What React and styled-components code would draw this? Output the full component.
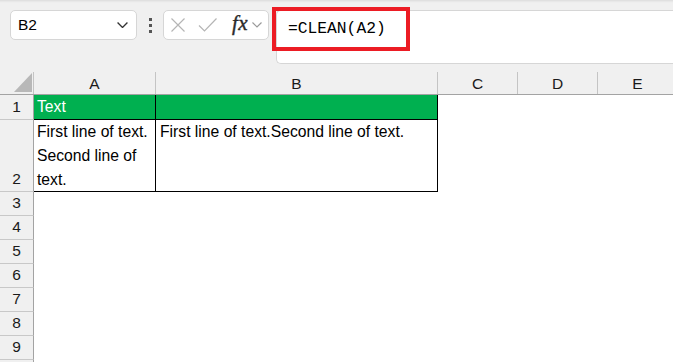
import React from 'react'
import styled, { createGlobalStyle } from 'styled-components'

const GlobalStyle = createGlobalStyle`
  html, body {
    margin: 0;
    padding: 0;
    background: #fff;
  }
  * {
    box-sizing: border-box;
  }
`

const Page = styled.div`
  width: 673px;
  height: 362px;
  overflow: hidden;
  display: flex;
  flex-direction: column;
  font-family: "Liberation Sans", Arial, sans-serif;
`

const Toolbar = styled.div`
  position: relative;
  height: 72px;
  flex-shrink: 0;
  display: flex;
  align-items: flex-start;
  padding: 10px 0 0 10px;
  background: linear-gradient(#dcdcdc 0, #ececec 2px, #f0f0f0 3px);
`

const NameBox = styled.div`
  width: 127px;
  height: 30px;
  display: flex;
  align-items: center;
  justify-content: space-between;
  padding: 0 8px 0 7px;
  background: #fff;
  border: 1px solid #d6d6d6;
  border-radius: 5px;
  font-size: 15.5px;
  color: #000;
`

const Dots = styled.div`
  width: 26px;
  height: 30px;
  display: flex;
  flex-direction: column;
  align-items: center;
  justify-content: center;
  gap: 3px;
`

const Dot = styled.span`
  width: 3px;
  height: 3px;
  background: #555;
`

const FxBox = styled.div`
  width: 106px;
  height: 30px;
  display: flex;
  align-items: center;
  padding: 0 4px 0 6px;
  background: #fff;
  border: 1px solid #d6d6d6;
  border-radius: 5px;
`

const Fx = styled.span`
  font-family: "Liberation Serif", "Times New Roman", serif;
  font-style: italic;
  font-size: 21px;
  color: #2b2b2b;
  margin: 0 4px 3px 14px;
  letter-spacing: 0.5px;
  -webkit-text-stroke: 0.4px #2b2b2b;
`

const FormulaBox = styled.div`
  flex: 1;
  height: 54px;
  margin-left: 7px;
  padding: 8px 0 0 11px;
  background: #fff;
  border: 1px solid #d6d6d6;
  border-right: none;
  border-radius: 5px 0 0 5px;
  font-family: "Liberation Mono", "Courier New", monospace;
  font-size: 16.3px;
  color: #000;
`

const Highlight = styled.div`
  position: absolute;
  left: 272px;
  top: 7px;
  width: 138px;
  height: 44px;
  border: 4px solid #ec1c24;
  pointer-events: none;
`

const Row = styled.div`
  display: flex;
  flex-shrink: 0;
  height: ${p => p.h}px;
`

const HeaderRow = styled(Row)`
  background: #f0f0f0;
  border-bottom: 1px solid #a3a3a3;
`

const Corner = styled.div`
  width: 34px;
  flex-shrink: 0;
  display: flex;
  align-items: flex-end;
  justify-content: flex-end;
  padding: 0 1px 2px 0;
  border-right: 1px solid #c4c4c4;
`

const ColHead = styled.div`
  width: ${p => p.w}px;
  flex-shrink: 0;
  display: flex;
  align-items: center;
  justify-content: center;
  padding-top: 1px;
  font-size: 15.5px;
  color: #1a1a1a;
  border-right: 1px solid #c4c4c4;
`

const RowHead = styled.div`
  width: 34px;
  flex-shrink: 0;
  display: flex;
  align-items: flex-end;
  justify-content: center;
  padding-bottom: 1px;
  background: #f0f0f0;
  border-right: 1px solid #a3a3a3;
  border-bottom: 1px solid #c8c8c8;
  font-size: 15.5px;
  line-height: 22px;
  color: #1a1a1a;
`

const Cell = styled.div`
  width: ${p => p.w}px;
  flex-shrink: 0;
  padding: 0 2px 0 ${p => p.pad || 3}px;
  font-size: 15.7px;
  line-height: 24px;
  color: ${p => (p.fill ? '#fff' : '#000')};
  background: ${p => p.fill || '#fff'};
  border-right: 1px solid ${p => (p.boxed ? '#000' : 'transparent')};
  border-bottom: 1px solid ${p => (p.boxed ? '#000' : 'transparent')};
  white-space: ${p => (p.wrap ? 'normal' : 'nowrap')};
  overflow: visible;
`

const Filler = styled.div`
  flex: 1;
  background: ${p => p.bg || '#fff'};
`

const columns = [
  { name: 'A', w: 122 },
  { name: 'B', w: 282 },
  { name: 'C', w: 80 },
  { name: 'D', w: 80 },
  { name: 'E', w: 80 },
]

const GREEN = '#00b050'

const XIcon = () => (
  <svg width="16" height="16" viewBox="0 0 16 16">
    <path d="M1.5 1.5 L14.5 14.5 M14.5 1.5 L1.5 14.5" stroke="#b5b5b5" strokeWidth="1.2" fill="none" />
  </svg>
)

const CheckIcon = () => (
  <svg width="20" height="16" viewBox="0 0 20 16" style={{ marginLeft: 12 }}>
    <path d="M1 8.5 L6.5 14 L18.5 1.5" stroke="#b5b5b5" strokeWidth="1.2" fill="none" />
  </svg>
)

const Chevron = ({ size = 11, color = '#333' }) => (
  <svg width={size} height={size * 0.6} viewBox="0 0 10 6">
    <path d="M0.5 0.5 L5 5 L9.5 0.5" stroke={color} strokeWidth="1.2" fill="none" />
  </svg>
)

const Triangle = () => (
  <svg width="18" height="19" viewBox="0 0 18 19">
    <path d="M18 0 L18 19 L0 19 Z" fill="#b8b8b8" />
  </svg>
)

export default function App() {
  const emptyRows = [3, 4, 5, 6, 7, 8, 9]

  return (
    <Page>
      <GlobalStyle />
      <Toolbar>
        <NameBox>
          <span>B2</span>
          <Chevron size={11} color="#333" />
        </NameBox>
        <Dots>
          <Dot />
          <Dot />
          <Dot />
        </Dots>
        <FxBox>
          <XIcon />
          <CheckIcon />
          <Fx>fx</Fx>
          <Chevron size={10} color="#9a9a9a" />
        </FxBox>
        <FormulaBox>=CLEAN(A2)</FormulaBox>
        <Highlight />
      </Toolbar>

      <HeaderRow h={23}>
        <Corner>
          <Triangle />
        </Corner>
        {columns.map(c => (
          <ColHead key={c.name} w={c.w}>{c.name}</ColHead>
        ))}
        <Filler bg="#f0f0f0" />
      </HeaderRow>

      <Row h={25}>
        <RowHead>1</RowHead>
        <Cell w={122} fill={GREEN} boxed>Text</Cell>
        <Cell w={282} fill={GREEN} boxed />
        <Filler />
      </Row>

      <Row h={72}>
        <RowHead>2</RowHead>
        <Cell w={122} boxed wrap>First line of text. Second line of text.</Cell>
        <Cell w={282} boxed pad={4}>First line of text.Second line of text.</Cell>
        <Filler />
      </Row>

      {emptyRows.map(n => (
        <Row key={n} h={24}>
          <RowHead>{n}</RowHead>
          <Filler />
        </Row>
      ))}
      <Row h={10}>
        <RowHead />
        <Filler />
      </Row>
    </Page>
  )
}
